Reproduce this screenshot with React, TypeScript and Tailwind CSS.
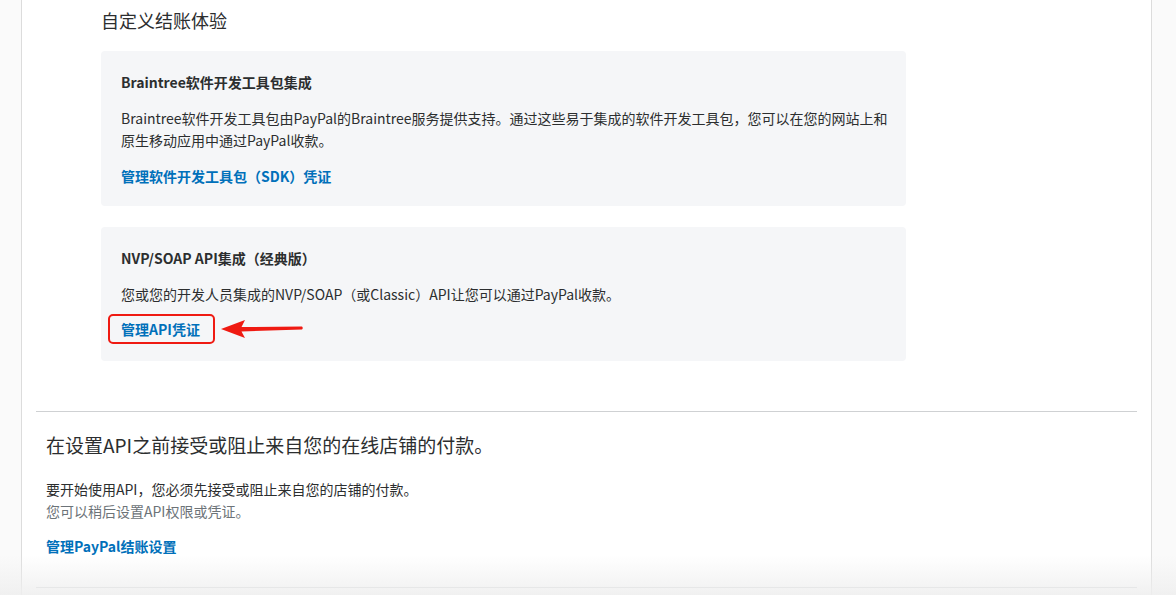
import React from 'react';

const font = { fontFamily: '"Noto Sans CJK SC", "Noto Sans", sans-serif' };

function Card({ title, className = 'pb-5', children }: { title: string; className?: string; children: React.ReactNode }) {
  return (
    <div className={`w-[805px] rounded-[4px] bg-[#f5f6f8] px-5 pt-[21px] ${className}`}>
      <h3 className="text-[14px] leading-5 font-bold text-[#2c2e2f]">{title}</h3>
      {children}
    </div>
  );
}

function Arrow() {
  return (
    <svg width="86" height="24" viewBox="0 0 86 24" className="absolute left-[calc(100%+19px)] top-1/2 -translate-y-1/2">
      <path
        d="M2 12 L26 3 L22.5 10 L83 9.6 Q84.5 11 83 12.6 L22.5 14.4 L26 21 Z"
        fill="#ef1a12"
      />
    </svg>
  );
}

export default function App() {
  return (
    <div className="relative flex h-[595px] w-full overflow-hidden bg-white text-[#2c2e2f]" style={font}>
      <div className="w-[21px] shrink-0 border-r border-[#dcdcdc] bg-[#fafafa] box-content" />

      <main className="flex-1 px-[14px]">
        <section className="pl-[65px] pt-2 pb-[50px]">
          <h2 className="text-[18px] leading-6 text-[#2c2e2f]">自定义结账体验</h2>

          <div className="mt-[19px] flex flex-col gap-[21px]">
            <Card title="Braintree软件开发工具包集成">
              <p className="mt-[15px] w-[770px] text-[14px] leading-[22px]">
                Braintree软件开发工具包由PayPal的Braintree服务提供支持。通过这些易于集成的软件开发工具包，您可以在您的网站上和原生移动应用中通过PayPal收款。
              </p>
              <a className="mt-[15px] block text-[14px] leading-5 font-semibold text-[#0070ba]">
                管理软件开发工具包（SDK）凭证
              </a>
            </Card>

            <Card title="NVP/SOAP API集成（经典版）" className="pb-[22px]">
              <p className="mt-[15px] text-[14px] leading-[22px]">
                您或您的开发人员集成的NVP/SOAP（或Classic）API让您可以通过PayPal收款。
              </p>
              <div className="mt-[14px] flex">
                <div className="relative">
                  <a className="block text-[14px] leading-5 font-semibold text-[#0070ba]">管理API凭证</a>
                  <span className="pointer-events-none absolute -left-[13px] -right-[15px] -top-[5px] -bottom-[5px] rounded-[5px] border-2 border-[#ef1a12]" />
                  <Arrow />
                </div>
              </div>
            </Card>
          </div>
        </section>

        <section className="border-y border-[#cfd1d3] px-[10px] pt-[21px] pb-[31px]">
          <h2 className="text-[19px] leading-6">在设置API之前接受或阻止来自您的在线店铺的付款。</h2>
          <p className="mt-[21px] text-[14px] leading-[22px]">要开始使用API，您必须先接受或阻止来自您的店铺的付款。</p>
          <p className="text-[14px] leading-[22px] text-[#6c7378]">您可以稍后设置API权限或凭证。</p>
          <a className="mt-[14px] block text-[14px] leading-5 font-semibold text-[#0070ba]">管理PayPal结账设置</a>
        </section>
      </main>

      <div className="w-[25px] shrink-0 border-l border-[#dcdcdc] bg-[#fafafa]" />

      <div className="pointer-events-none absolute inset-x-0 bottom-0 h-[40px] bg-gradient-to-b from-transparent to-[#efefef]/90" />
    </div>
  );
}
